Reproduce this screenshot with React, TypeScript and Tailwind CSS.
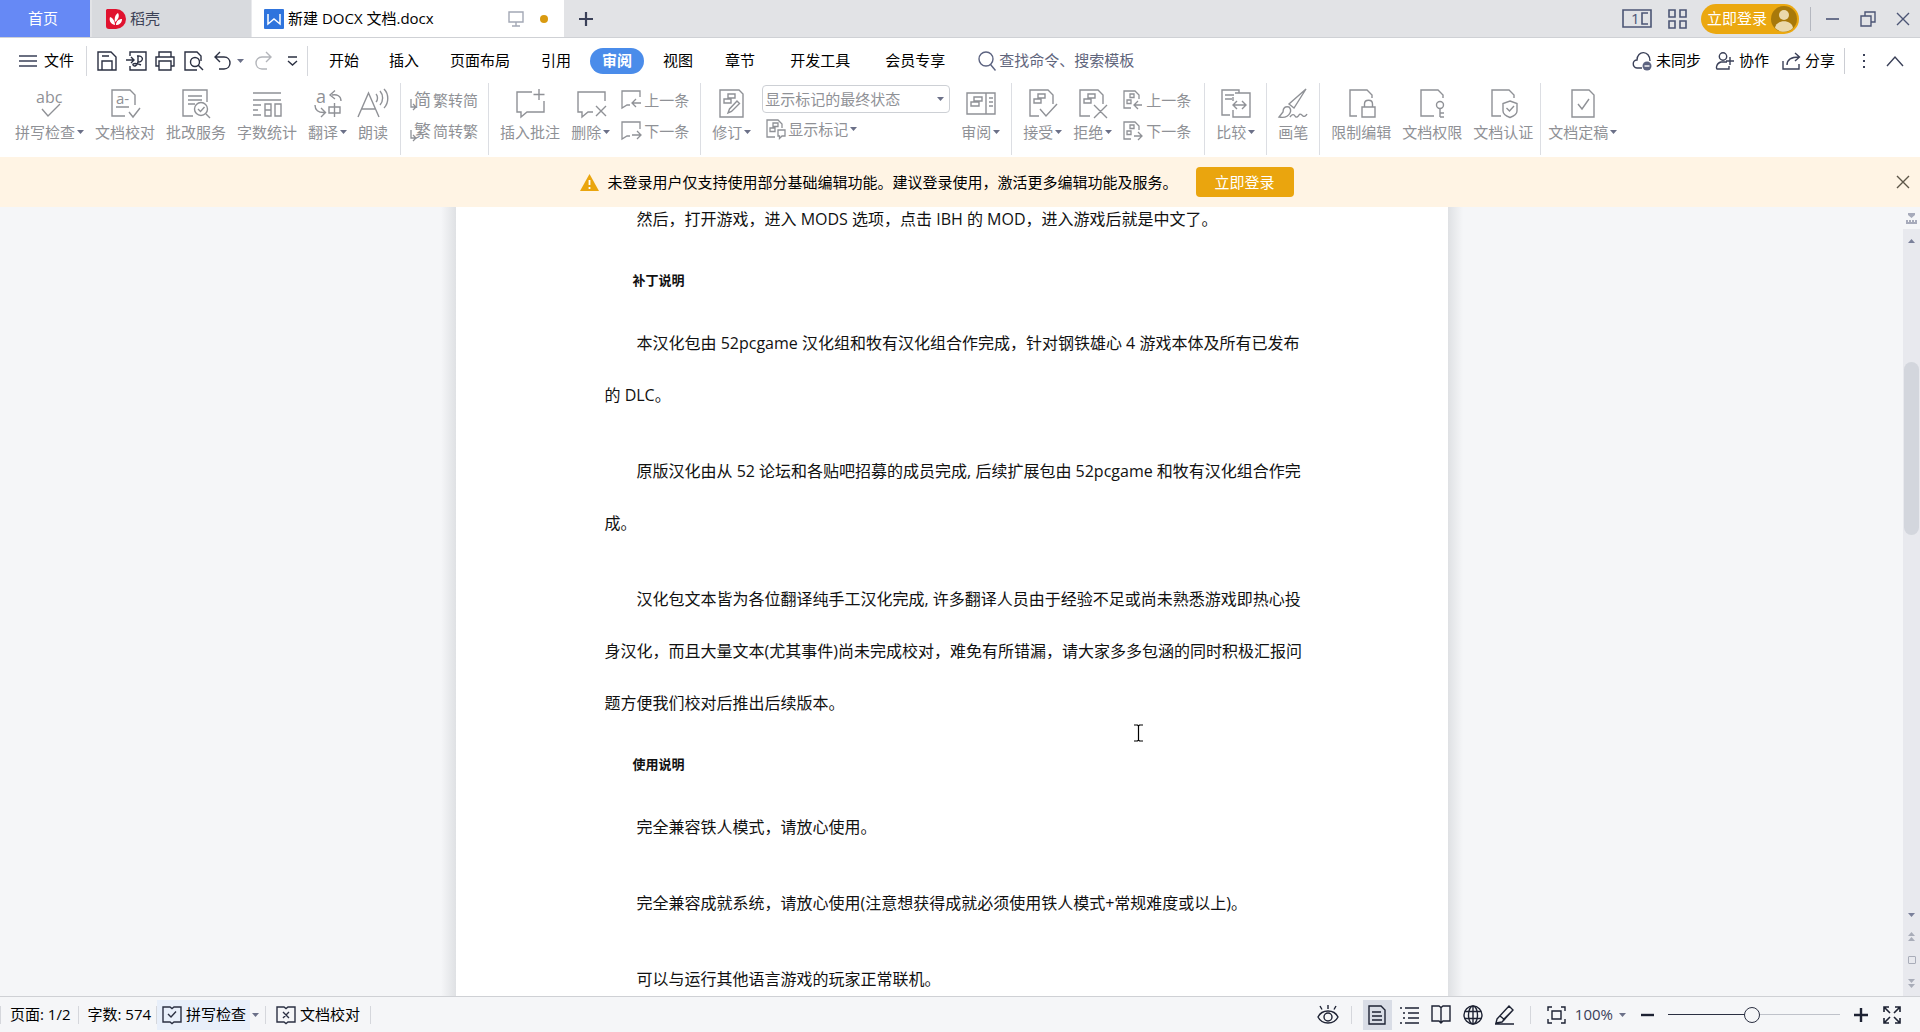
import React, { ReactNode } from "react";

type IconProps = { w?: number; h?: number; sw?: number; className?: string; children: ReactNode };

function Icon({ w = 20, h = 20, sw = 1.4, className = "", children }: IconProps) {
  return (
    <svg
      width={w}
      height={h}
      viewBox={`0 0 ${w} ${h}`}
      fill="none"
      stroke="currentColor"
      strokeWidth={sw}
      className={`shrink-0 overflow-visible ${className}`}
      aria-hidden="true"
    >
      {children}
    </svg>
  );
}

const iconText = { fill: "currentColor", stroke: "none", fontFamily: '"Open Sans", "Noto Sans CJK SC", sans-serif' };

function Caret({ className = "text-[#6b7088]" }: { className?: string }) {
  return (
    <svg width="7" height="4" viewBox="0 0 7 4" className={`shrink-0 ${className}`} aria-hidden="true">
      <path d="M0 0h7L3.5 4z" fill="currentColor" />
    </svg>
  );
}

/* ---------- ribbon icons ---------- */

const SpellIcon = () => (
  <Icon w={30} h={29}>
    <text x="1" y="14" fontSize="16" {...iconText}>abc</text>
    <path d="M7 20l6 7 12-12" />
  </Icon>
);
const ProofIcon = () => (
  <Icon w={30} h={29}>
    <path d="M15 27H2V1h18l5 5v10M6 18h13M19 23l4 5 7-9" />
    <text x="6" y="15" fontSize="15" {...iconText}>a-</text>
  </Icon>
);
const ReviewServiceIcon = () => (
  <Icon w={30} h={29}>
    <path d="M12 27H2V1h24v12M7 7h14M7 11h14M7 15h7" />
    <circle cx="20" cy="20" r="6.5" />
    <path d="M25 25l4 4M17 20l2.500 2.500 4-4.500" />
  </Icon>
);
const CountIcon = () => (
  <Icon w={30} h={29}>
    <path d="M1 4h28M1 11h28M1 16h8M1 21h5M1 26h8" />
    <path d="M13 15h6v12h-6zM13 21h6M23 15h6v12h-6z" />
  </Icon>
);
const TranslateIcon = () => (
  <Icon w={30} h={29}>
    <text x="3" y="14" fontSize="18" {...iconText}>a</text>
    <path d="M28 12c0-5-4-7-9-6M22 1.500L17 6l5 4M2 16c0 5 3 8 10 7.500M8 19l4.500 4.500L8 28" />
    <path d="M16 18h11v6H16zM21.500 14v14" />
  </Icon>
);
const ReadIcon = () => (
  <Icon w={30} h={29}>
    <path d="M0 28L10.500 4 21 28M4 20h13M18 5c2 2 2 6 0 8M22 2c3.500 4 3.500 10 0 14M26 0c5 5 5 14 0 19" />
  </Icon>
);
const ToSimplifiedIcon = () => (
  <Icon w={21} h={20} sw={1.3}>
    <text x="4" y="16" fontSize="17" {...iconText}>简</text>
    <path d="M1 9v8h5M3 14l3 3-3 3" />
  </Icon>
);
const ToTraditionalIcon = () => (
  <Icon w={21} h={20} sw={1.3}>
    <text x="4" y="16" fontSize="17" {...iconText}>繁</text>
    <path d="M1 9v8h5M3 14l3 3-3 3" />
  </Icon>
);
const InsertCommentIcon = () => (
  <Icon w={30} h={29}>
    <path d="M17 3H2v20h4v5l6-5h17V12M24 0v11M18.500 5.500h11" />
  </Icon>
);
const DeleteCommentIcon = () => (
  <Icon w={30} h={29}>
    <path d="M29 12V3H2v20h4v5l6-5h5M20 17l10 10M30 17L20 27" />
  </Icon>
);
const PrevCommentIcon = () => (
  <Icon w={21} h={20} sw={1.3}>
    <path d="M19 7V1H1v17l5-3h3M20 13h-9M15 9l-4 4 4 4" />
  </Icon>
);
const NextCommentIcon = () => (
  <Icon w={21} h={20} sw={1.3}>
    <path d="M19 8V1H1v17l5-3h3M11 14h9M16 10l4 4-4 4" />
  </Icon>
);
const TrackIcon = () => (
  <Icon w={26} h={29}>
    <path d="M1 1h19l4 4v23H1zM9 5h7v4H9zM5 10h7v4H5z" />
    <path d="M9 24l1.500-4L18 12l2.500 2.500-8 8z" />
  </Icon>
);
const ShowMarkIcon = () => (
  <Icon w={20} h={20} sw={1.3}>
    <path d="M9 18H1V1h11l4 4v4M7 4h5v3.500H7zM4 9h5v3.500H4zM12 11h7v6h-3l-2.500 2.500V17H12z" />
  </Icon>
);
const PaneIcon = () => (
  <Icon w={30} h={29}>
    <path d="M1 4h28v21H1zM20 4v21M8 8h8v4H8zM5 13h8v4H5zM23 9h4M23 13h4M23 17h4" />
  </Icon>
);
const AcceptIcon = () => (
  <Icon w={30} h={29}>
    <path d="M11 27H2V1h18l5 5v9M10 5h7v4h-7zM6 10h7v4H6zM12 20l6 7L29 15" />
  </Icon>
);
const RejectIcon = () => (
  <Icon w={30} h={29}>
    <path d="M12 27H2V1h18l5 5v9M10 5h7v4h-7zM6 10h7v4H6zM16 16l13 13M29 16L16 29" />
  </Icon>
);
const PrevChangeIcon = () => (
  <Icon w={21} h={20} sw={1.3}>
    <path d="M8 18H1V1h11l4 4v4M7 4h4v3.500H7zM4 10h4v3.500H4zM19 15h-8M15 11l-4 4 4 4" />
  </Icon>
);
const NextChangeIcon = () => (
  <Icon w={21} h={20} sw={1.3}>
    <path d="M8 18H1V1h11l4 4v4M7 4h4v3.500H7zM4 10h4v3.500H4zM11 15h8M15 11l4 4-4 4" />
  </Icon>
);
const CompareIcon = () => (
  <Icon w={30} h={29}>
    <path d="M9 26H1V1h17v3M4 6h9M4 10h7M14 4h15v24H12v-7M12 12V8M12 16h13M16 12l-4 4 4 4M21 12l4 4-4 4" />
  </Icon>
);
const BrushIcon = () => (
  <Icon w={30} h={29}>
    <path d="M28 0L11 15l5 4L28 0zM11 18c-4-1-6 1-6 5l-4 5c5 1 9 0 11-4 1-2 1-4-1-6zM12 28c2-3 4-3 5-1s3 1 4-1 3 0 4 1 3 0 4-2" />
  </Icon>
);
const LockDocIcon = () => (
  <Icon w={30} h={29}>
    <path d="M11 27H4V1h17l5 5v3M16 18h13v10H16zM18.500 18v-3c0-5 8-5 8 0v3" />
  </Icon>
);
const KeyDocIcon = () => (
  <Icon w={30} h={29}>
    <path d="M17 27H4V1h17l5 5v3M23 19v9M23 24h4M23 28h4" />
    <circle cx="23" cy="16" r="3.500" />
  </Icon>
);
const ShieldDocIcon = () => (
  <Icon w={30} h={29}>
    <path d="M13 27H4V1h17l5 5v3M22 12l7 2.500V22c0 3-3 5-7 6.500-4-1.500-7-3.500-7-6.500v-7.500zM18.500 19l3 3 4.500-5" />
  </Icon>
);
const FinalDocIcon = () => (
  <Icon w={30} h={29}>
    <path d="M4 1h17l5 5v22H4zM10 15l4 5 7-10" />
  </Icon>
);

/* ---------- ribbon building blocks ---------- */

function BigButton({ icon, label, drop }: { icon: ReactNode; label: string; drop?: boolean }) {
  return (
    <button className="flex shrink-0 flex-col items-center gap-1 pt-1.5">
      {icon}
      <span className="flex items-center gap-0.5 whitespace-nowrap leading-5">
        {label}
        {drop && <Caret />}
      </span>
    </button>
  );
}

function SmallButton({ icon, label, drop }: { icon: ReactNode; label: string; drop?: boolean }) {
  return (
    <button className="flex h-5 shrink-0 items-center gap-0.5 whitespace-nowrap leading-5">
      {icon}
      {label}
      {drop && <Caret />}
    </button>
  );
}

function Stack({ children }: { children: ReactNode }) {
  return <div className="flex shrink-0 flex-col gap-[11px] pr-0.5 pt-[7px]">{children}</div>;
}

function Group({ children, className = "px-[11px]" }: { children: ReactNode; className?: string }) {
  return <div className={`flex h-[72px] shrink-0 items-start gap-[11px] border-r border-[#dcdee3] ${className}`}>{children}</div>;
}

/* ---------- title bar ---------- */

function TitleBar() {
  return (
    <header className="flex h-[38px] items-stretch border-b border-[#cfd1d5] bg-[#e2e3e6]">
      <button className="w-[90px] bg-[#6689f5] pr-1 text-white">首页</button>
      <button className="ml-0.5 flex w-[160px] items-center gap-1 border-r border-[#e9eaed] bg-[#d8dade] pl-3.5 text-[#3c4257]">
        <svg width="20" height="20" viewBox="0 0 20 20" aria-hidden="true">
          <path d="M1 0h9a10 10 0 0 1 0 20H3a3 3 0 0 1-3-3V1z" fill="#e0122f" />
          <path d="M9 16c-5-1-6-5-5-8 3 1 5 4 5 8zM9 13c-1-5 1-8 3-9 2 3 0 7-3 9zM10 16c0-4 3-6 6-6 0 4-3 6-6 6z" fill="#fff" />
        </svg>
        稻壳
      </button>
      <div className="flex w-[312px] items-center bg-white pl-3">
        <svg width="20" height="20" viewBox="0 0 20 20" aria-hidden="true">
          <rect width="20" height="20" rx="1" fill="#2f74dd" />
          <path d="M4 5v10l6-5 6 5V5" fill="none" stroke="#fff" strokeWidth="1.500" />
        </svg>
        <span className="ml-1 whitespace-nowrap text-black">新建 DOCX 文档.docx</span>
        <Icon w={16} h={16} className="ml-auto text-[#a3a8b5]">
          <path d="M1 1h14v10H1zM8 11v4M4 15h8" />
        </Icon>
        <span className="ml-4 mr-4 size-2 rounded-full bg-[#d99a10]" />
      </div>
      <button aria-label="新建标签" className="ml-3.5 flex items-center text-[#3a4058]">
        <Icon w={16} h={16} sw={2.2}>
          <path d="M8 1v14M1 8h14" />
        </Icon>
      </button>
      <div className="ml-auto flex items-center pr-2.5 text-[#4c5575]">
        <button aria-label="阅读模式">
          <Icon w={30} h={20} sw={1.6}>
            <path d="M1 1h28v17H1zM26 4h-6v11h6" />
            <text x="9" y="15" fontSize="15" {...iconText}>1</text>
          </Icon>
        </button>
        <button aria-label="标签列表" className="ml-4">
          <Icon w={19} h={20} sw={1.6}>
            <path d="M1 1h6v7H1zM12 1h6v7h-6zM1 12h6v7H1zM12 12h6v7h-6z" />
          </Icon>
        </button>
        <button className="ml-3.5 flex h-[30px] items-center gap-1 rounded-full bg-[#eba810] pl-1.5 pr-0.5 text-white">
          立即登录
          <svg width="26" height="26" viewBox="0 0 26 26" aria-hidden="true">
            <circle cx="13" cy="13" r="13" fill="#a8790a" />
            <circle cx="13" cy="9" r="5" fill="#ebd9ab" />
            <path d="M4 22c1-9 17-9 18 0-5 5-13 5-18 0z" fill="#ebd9ab" />
          </svg>
        </button>
        <span className="ml-[11px] h-6 w-px bg-[#b4b7bf]" />
        <button aria-label="最小化" className="ml-[15px]">
          <Icon w={14} h={16} sw={1.6}>
            <path d="M0 8h13" />
          </Icon>
        </button>
        <button aria-label="还原" className="ml-5">
          <Icon w={16} h={16}>
            <path d="M1 5h10v10H1zM5 5V1h10v10h-4" />
          </Icon>
        </button>
        <button aria-label="关闭" className="ml-5">
          <Icon w={14} h={14}>
            <path d="M1 1l12 12M13 1L1 13" />
          </Icon>
        </button>
      </div>
    </header>
  );
}

/* ---------- menu row ---------- */

function MenuRow() {
  return (
    <nav className="flex h-[45px] items-center text-[15px] text-black">
      <button className="ml-[19px] flex items-center gap-[7px]">
        <Icon w={18} h={14} className="text-[#3a4058]">
          <path d="M0 2h18M0 7h18M0 12h18" />
        </Icon>
        文件
      </button>
      <span className="ml-3 h-[30px] w-px bg-[#d5d7dc]" />
      <div className="ml-2.5 flex items-center text-[#2b3042]">
        <button aria-label="保存">
          <Icon w={20} h={20}>
            <path d="M1 1h13l5 5v13H1zM5 19v-9h10v9M5 5h7" />
          </Icon>
        </button>
        <button aria-label="输出为PDF" className="ml-[9px]">
          <Icon w={21} h={20}>
            <path d="M4 5V1h16v18H4v-4M0 9h8M5 6l3 3-3 3M11 5c7-1 7 6 1 6V5M12 11c-1 4-4 5-5 3s4-2 8 0" />
          </Icon>
        </button>
        <button aria-label="打印" className="ml-2">
          <Icon w={20} h={20}>
            <path d="M4 6V1h12v5M4 15H1V6h18v9h-3M4 10h12v9H4z" />
          </Icon>
        </button>
        <button aria-label="打印预览" className="ml-[9px]">
          <Icon w={20} h={20}>
            <path d="M13 19H1V1h12l4 4v5" />
            <circle cx="11" cy="11" r="4.500" />
            <path d="M14 14l5 5" />
          </Icon>
        </button>
        <button aria-label="撤销" className="ml-2.5 flex items-center gap-1.5">
          <Icon w={17} h={20}>
            <path d="M6 1L1 6l5 5M1 6h9c8 0 8 12 0 12H5" />
          </Icon>
          <Caret />
        </button>
        <button aria-label="恢复" className="ml-2.5 text-[#b3b5ba]">
          <Icon w={18} h={20}>
            <path d="M12 1l5 5-5 5M17 6H8c-8 0-8 12 0 12h5" />
          </Icon>
        </button>
        <button aria-label="自定义快速访问" className="ml-[15px]">
          <Icon w={11} h={10}>
            <path d="M1 1h9M1 5l4.500 4L10 5" />
          </Icon>
        </button>
      </div>
      <span className="ml-[9px] h-[30px] w-px bg-[#d5d7dc]" />
      <div className="ml-1.5 flex items-center whitespace-nowrap">
        <button className="px-[15px]">开始</button>
        <button className="px-[15px]">插入</button>
        <button className="px-4">页面布局</button>
        <button className="px-[15px]">引用</button>
        <button className="ml-1 h-[26px] rounded-full bg-[#4a8cea] px-3 font-bold text-white">审阅</button>
        <button className="ml-[3px] px-4">视图</button>
        <button className="px-4">章节</button>
        <button className="ml-[3px] px-4">开发工具</button>
        <button className="ml-[3px] px-4">会员专享</button>
      </div>
      <label className="ml-[17px] flex items-center gap-[3px] text-[#5c6380]">
        <Icon w={18} h={20}>
          <circle cx="8" cy="8" r="7" />
          <path d="M12.500 13.500l5 6" />
        </Icon>
        <input className="w-40 bg-transparent outline-none placeholder:text-[#5f657c]" placeholder="查找命令、搜索模板" aria-label="查找命令、搜索模板" />
      </label>
      <div className="ml-auto flex items-center pr-4 text-[#3a4058]">
        <button className="flex items-center gap-1">
          <Icon w={20} h={20}>
            <path d="M10 17H5c-5-1-5-8 0-8 0-10 13-10 13 1" />
            <circle cx="15" cy="15" r="4.500" fill="#5c6380" stroke="none" />
            <path d="M12.500 15h5" stroke="#fff" />
          </Icon>
          <span className="text-black">未同步</span>
        </button>
        <button className="ml-[15px] flex items-center gap-[5px]">
          <Icon w={18} h={18}>
            <circle cx="7" cy="4.500" r="3.700" />
            <path d="M11 10H5c-5 1-5 7-4 7h12v-3M14 5v8M10 9h8" />
          </Icon>
          <span className="text-black">协作</span>
        </button>
        <button className="ml-[13px] flex items-center gap-1">
          <Icon w={19} h={18}>
            <path d="M1 9v8h16v-5M5 13c0-6 4-8 12-8M13 1l4.500 4-4.500 4" />
          </Icon>
          <span className="text-black">分享</span>
        </button>
        <span className="ml-[9px] h-[26px] w-px bg-[#cbcdd3]" />
        <button aria-label="更多" className="ml-[17px]">
          <Icon w={4} h={16}>
            <path d="M2 1v2M2 7v2M2 13v2" strokeWidth="2" />
          </Icon>
        </button>
        <button aria-label="收起功能区" className="ml-5">
          <Icon w={18} h={12}>
            <path d="M1 11l8-9 8 9" />
          </Icon>
        </button>
      </div>
    </nav>
  );
}

/* ---------- ribbon ---------- */

function Ribbon() {
  return (
    <section className="flex h-[74px] items-start text-[15px] text-[#8f9196]">
      <Group className="pl-[15px] pr-3">
        <BigButton icon={<SpellIcon />} label="拼写检查" drop />
        <BigButton icon={<ProofIcon />} label="文档校对" />
        <BigButton icon={<ReviewServiceIcon />} label="批改服务" />
        <BigButton icon={<CountIcon />} label="字数统计" />
        <BigButton icon={<TranslateIcon />} label="翻译" drop />
        <BigButton icon={<ReadIcon />} label="朗读" />
      </Group>
      <Group className="pl-[9px] pr-2">
        <Stack>
          <SmallButton icon={<ToSimplifiedIcon />} label="繁转简" />
          <SmallButton icon={<ToTraditionalIcon />} label="简转繁" />
        </Stack>
      </Group>
      <Group className="pl-[11px] pr-[9px]">
        <BigButton icon={<InsertCommentIcon />} label="插入批注" />
        <BigButton icon={<DeleteCommentIcon />} label="删除" drop />
        <Stack>
          <SmallButton icon={<PrevCommentIcon />} label="上一条" />
          <SmallButton icon={<NextCommentIcon />} label="下一条" />
        </Stack>
      </Group>
      <Group className="pl-[11px] pr-[11px]">
        <BigButton icon={<TrackIcon />} label="修订" drop />
        <div className="flex w-[188px] flex-col pt-0.5">
          <div className="relative">
            <select aria-label="标记显示方式" className="h-7 w-full appearance-none rounded-sm border border-[#cdd0d5] bg-white pl-0.5 leading-5">
              <option>显示标记的最终状态</option>
            </select>
            <span className="pointer-events-none absolute right-1.5 top-3">
              <Caret />
            </span>
          </div>
          <div className="mt-1.5 pl-1">
            <SmallButton icon={<ShowMarkIcon />} label="显示标记" drop />
          </div>
        </div>
        <BigButton icon={<PaneIcon />} label="审阅" drop />
      </Group>
      <Group>
        <BigButton icon={<AcceptIcon />} label="接受" drop />
        <BigButton icon={<RejectIcon />} label="拒绝" drop />
        <Stack>
          <SmallButton icon={<PrevChangeIcon />} label="上一条" />
          <SmallButton icon={<NextChangeIcon />} label="下一条" />
        </Stack>
      </Group>
      <Group>
        <BigButton icon={<CompareIcon />} label="比较" drop />
      </Group>
      <Group>
        <BigButton icon={<BrushIcon />} label="画笔" />
      </Group>
      <Group className="pl-[11px] pr-[7px]">
        <BigButton icon={<LockDocIcon />} label="限制编辑" />
        <BigButton icon={<KeyDocIcon />} label="文档权限" />
        <BigButton icon={<ShieldDocIcon />} label="文档认证" />
      </Group>
      <div className="flex pl-[7px]">
        <BigButton icon={<FinalDocIcon />} label="文档定稿" drop />
      </div>
    </section>
  );
}

/* ---------- login notice ---------- */

function Notice() {
  return (
    <div className="flex h-[50px] items-center bg-[#fff4e4]">
      <div className="flex flex-1 items-center justify-center pr-[22px]">
        <svg width="19" height="17" viewBox="0 0 19 17" aria-hidden="true">
          <path d="M9.500 0L19 17H0z" fill="#eaa50e" />
          <path d="M9.500 6v5M9.500 13v2" stroke="#fff" strokeWidth="1.800" />
        </svg>
        <p className="ml-2 whitespace-nowrap text-[15px] text-black">未登录用户仅支持使用部分基础编辑功能。建议登录使用，激活更多编辑功能及服务。</p>
        <button className="ml-[18px] h-[30px] w-[98px] rounded bg-[#eaa50e] text-[15px] text-white">立即登录</button>
      </div>
      <button aria-label="关闭提示" className="mr-2.5 text-[#5d5648]">
        <Icon w={14} h={14}>
          <path d="M1 1l12 12M13 1L1 13" />
        </Icon>
      </button>
    </div>
  );
}

/* ---------- document ---------- */

function P({ lines }: { lines: string[] }) {
  return (
    <p className="mb-6 whitespace-nowrap indent-8 leading-[52px]">
      {lines.map((l, i) => (
        <React.Fragment key={i}>
          {i > 0 && <br />}
          {l}
        </React.Fragment>
      ))}
    </p>
  );
}

function H({ children }: { children: ReactNode }) {
  return <h3 className="-mt-px mb-[25px] pl-7 text-[13px] font-bold leading-6">{children}</h3>;
}

function Document() {
  return (
    <main className="flex min-h-0 flex-1 bg-[#f5f6f8]">
      <div className="relative flex min-w-0 flex-1 justify-center overflow-hidden">
        <div className="w-[15px] bg-gradient-to-r from-[#f5f6f8] to-[#dfe1e4]" />
        <article className="w-[992px] bg-white pl-[149px] text-[16px] text-[#111]">
          <div className="-mt-[14px]">
            <P lines={["然后，打开游戏，进入 MODS 选项，点击 IBH 的 MOD，进入游戏后就是中文了。"]} />
            <H>补丁说明</H>
            <P lines={["本汉化包由 52pcgame 汉化组和牧有汉化组合作完成，针对钢铁雄心 4 游戏本体及所有已发布", "的 DLC。"]} />
            <P lines={["原版汉化由从 52 论坛和各贴吧招募的成员完成, 后续扩展包由 52pcgame 和牧有汉化组合作完", "成。"]} />
            <P
              lines={[
                "汉化包文本皆为各位翻译纯手工汉化完成, 许多翻译人员由于经验不足或尚未熟悉游戏即热心投",
                "身汉化，而且大量文本(尤其事件)尚未完成校对，难免有所错漏，请大家多多包涵的同时积极汇报问",
                "题方便我们校对后推出后续版本。",
              ]}
            />
            <H>使用说明</H>
            <P lines={["完全兼容铁人模式，请放心使用。"]} />
            <P lines={["完全兼容成就系统，请放心使用(注意想获得成就必须使用铁人模式+常规难度或以上)。"]} />
            <P lines={["可以与运行其他语言游戏的玩家正常联机。"]} />
          </div>
        </article>
        <div className="w-[15px] bg-gradient-to-l from-[#f5f6f8] to-[#dfe1e4]" />
        <svg width="9" height="18" viewBox="0 0 9 18" className="pointer-events-none absolute left-[1134px] top-[517px]" aria-hidden="true">
          <path d="M0 1h3.500l1 1 1-1H9M4.500 2v14M0 17h3.500l1-1 1 1H9" fill="none" stroke="#000" strokeWidth="1.200" />
        </svg>
      </div>
      <div className="flex w-[17px] flex-col items-center bg-[#e8e9ee] text-[#7a809a]">
        <button aria-label="标尺" className="flex h-[22px] w-full items-center justify-center bg-[#f5f6f8]">
          <svg width="11" height="11" viewBox="0 0 11 11" aria-hidden="true">
            <path d="M2 0h7v2L5.500 5 2 2zM0 7h2v2h1V7h2v2h1V7h2v2h1V7h2v4H0z" fill="#a7abbb" />
          </svg>
        </button>
        <button aria-label="向上滚动" className="mt-2.5 rotate-180">
          <Caret className="text-[#7a809a]" />
        </button>
        <div className="mt-[119px] h-[173px] w-[15px] rounded-full bg-[#d3d6dd]" />
        <div className="mb-2 mt-auto flex flex-col items-center gap-[15px]">
          <button aria-label="向下滚动">
            <Caret className="block text-[#7a809a]" />
          </button>
          <button aria-label="上一页">
            <svg width="7" height="9" viewBox="0 0 7 9" className="block" aria-hidden="true">
              <path d="M0 4l3.500-4L7 4zM0 9l3.500-4L7 9z" fill="#a9adb9" />
            </svg>
          </button>
          <button aria-label="选择浏览对象" className="size-2 rounded-[1px] border border-[#a9adb9]" />
          <button aria-label="下一页">
            <svg width="7" height="9" viewBox="0 0 7 9" className="block" aria-hidden="true">
              <path d="M0 0l3.500 4L7 0zM0 5l3.500 4L7 5z" fill="#a9adb9" />
            </svg>
          </button>
        </div>
      </div>
    </main>
  );
}

/* ---------- status bar ---------- */

const Bar = ({ className }: { className: string }) => <span className={`h-[18px] w-px bg-[#d5d7dc] ${className}`} />;

function StatusBar() {
  return (
    <footer className="flex h-[36px] items-center border-t border-[#cfd1d5] bg-[#f5f6f8] text-[15px] text-[#1d2233]">
      <Bar className="" />
      <span className="ml-[9px] whitespace-nowrap text-black">页面: 1/2</span>
      <Bar className="ml-[7px]" />
      <span className="ml-[9px] whitespace-nowrap text-black">字数: 574</span>
      <Bar className="ml-[5px]" />
      <button className="flex h-[30px] w-[93px] items-center gap-1 whitespace-nowrap bg-[#e8effa] pl-[5px] text-black">
        <Icon w={20} h={18} className="text-[#2b3042]">
          <path d="M1 1h7l2 1.500L12 1h7v15h-7l-2 1.500L8 16H1zM6 8l3 3 5-5.500" />
        </Icon>
        拼写检查
      </button>
      <button aria-label="拼写检查选项" className="ml-0.5">
        <Caret />
      </button>
      <Bar className="ml-1.5" />
      <button className="ml-2.5 flex items-center gap-1 whitespace-nowrap text-black">
        <Icon w={20} h={18} className="text-[#2b3042]">
          <path d="M1 1h7l2 1.500L12 1h7v15h-7l-2 1.500L8 16H1zM7 6l6 6M13 6l-6 6" />
        </Icon>
        文档校对
      </button>
      <Bar className="ml-2.5" />
      <div className="ml-auto flex items-center pr-[19px]">
        <button aria-label="护眼模式">
          <Icon w={22} h={20}>
            <path d="M1 12c4-8 16-8 20 0-4 8-16 8-20 0zM11 0v4M3 1l2 3.500M19 1l-2 3.500" />
            <circle cx="11" cy="12" r="4" />
          </Icon>
        </button>
        <Bar className="ml-3" />
        <button aria-label="页面视图" className="ml-[11px] flex h-[30px] w-[29px] items-center justify-center bg-[#d9dde6]">
          <Icon w={18} h={20}>
            <path d="M1 1h12l4 4v14H1zM4 7h9M4 11h10M4 15h10" />
          </Icon>
        </button>
        <button aria-label="大纲" className="ml-2">
          <Icon w={19} h={18}>
            <path d="M0 2h2M5 2h14M3 7h2M8 7h11M3 12h2M8 12h11M0 17h2M5 17h14" />
          </Icon>
        </button>
        <button aria-label="阅读版式" className="ml-3">
          <Icon w={20} h={20}>
            <path d="M1 1h7l2 1.500L12 1h7v15h-7l-2 2-2-2H1zM10 2v16" />
          </Icon>
        </button>
        <button aria-label="Web版式" className="ml-3">
          <Icon w={20} h={20}>
            <circle cx="10" cy="10" r="9" />
            <ellipse cx="10" cy="10" rx="4.500" ry="9" />
            <path d="M10 1v18M2 6.500h16M2 13.500h16" />
          </Icon>
        </button>
        <button aria-label="写作模式" className="ml-3">
          <Icon w={20} h={20}>
            <path d="M2 14L14 1l4 4L7 17l-6 1zM5 11l5 4M8 15L18 5M0 19h19" />
          </Icon>
        </button>
        <Bar className="ml-[15px]" />
        <button aria-label="页面缩放" className="ml-4">
          <Icon w={19} h={18}>
            <path d="M1 5V1h4M14 1h4v4M18 13v4h-4M5 17H1v-4M5 5h9v8H5z" />
          </Icon>
        </button>
        <button className="ml-[9px] flex items-center gap-1.5 text-[#3a4058]">
          100%
          <Caret />
        </button>
        <button aria-label="缩小" className="ml-[15px]">
          <Icon w={13} h={14} sw={2.4}>
            <path d="M0 7h13" />
          </Icon>
        </button>
        <input
          type="range"
          aria-label="显示比例"
          min={0}
          max={100}
          defaultValue={49}
          className="ml-3.5 h-4 w-[172px] appearance-none bg-[linear-gradient(90deg,#2b3042_49%,#bfc2ca_49%)] bg-[length:100%_1px] bg-center bg-no-repeat [&::-webkit-slider-thumb]:size-4 [&::-webkit-slider-thumb]:appearance-none [&::-webkit-slider-thumb]:rounded-full [&::-webkit-slider-thumb]:border [&::-webkit-slider-thumb]:border-[#2b3042] [&::-webkit-slider-thumb]:bg-[#f5f6f8]"
        />
        <button aria-label="放大" className="ml-3.5">
          <Icon w={14} h={14} sw={2.4}>
            <path d="M0 7h14M7 0v14" />
          </Icon>
        </button>
        <button aria-label="全屏显示" className="ml-[15px]">
          <Icon w={18} h={18} sw={1.6}>
            <path d="M1 6V1h5M12 1h5v5M17 12v5h-5M6 17H1v-5M1 1l6 6M17 1l-6 6M17 17l-6-6M1 17l6-6" />
          </Icon>
        </button>
      </div>
    </footer>
  );
}

export default function App() {
  return (
    <div className="flex h-screen flex-col overflow-hidden bg-white font-['Open_Sans','Noto_Sans_CJK_SC',sans-serif] text-[15px]">
      <TitleBar />
      <MenuRow />
      <Ribbon />
      <Notice />
      <Document />
      <StatusBar />
    </div>
  );
}
